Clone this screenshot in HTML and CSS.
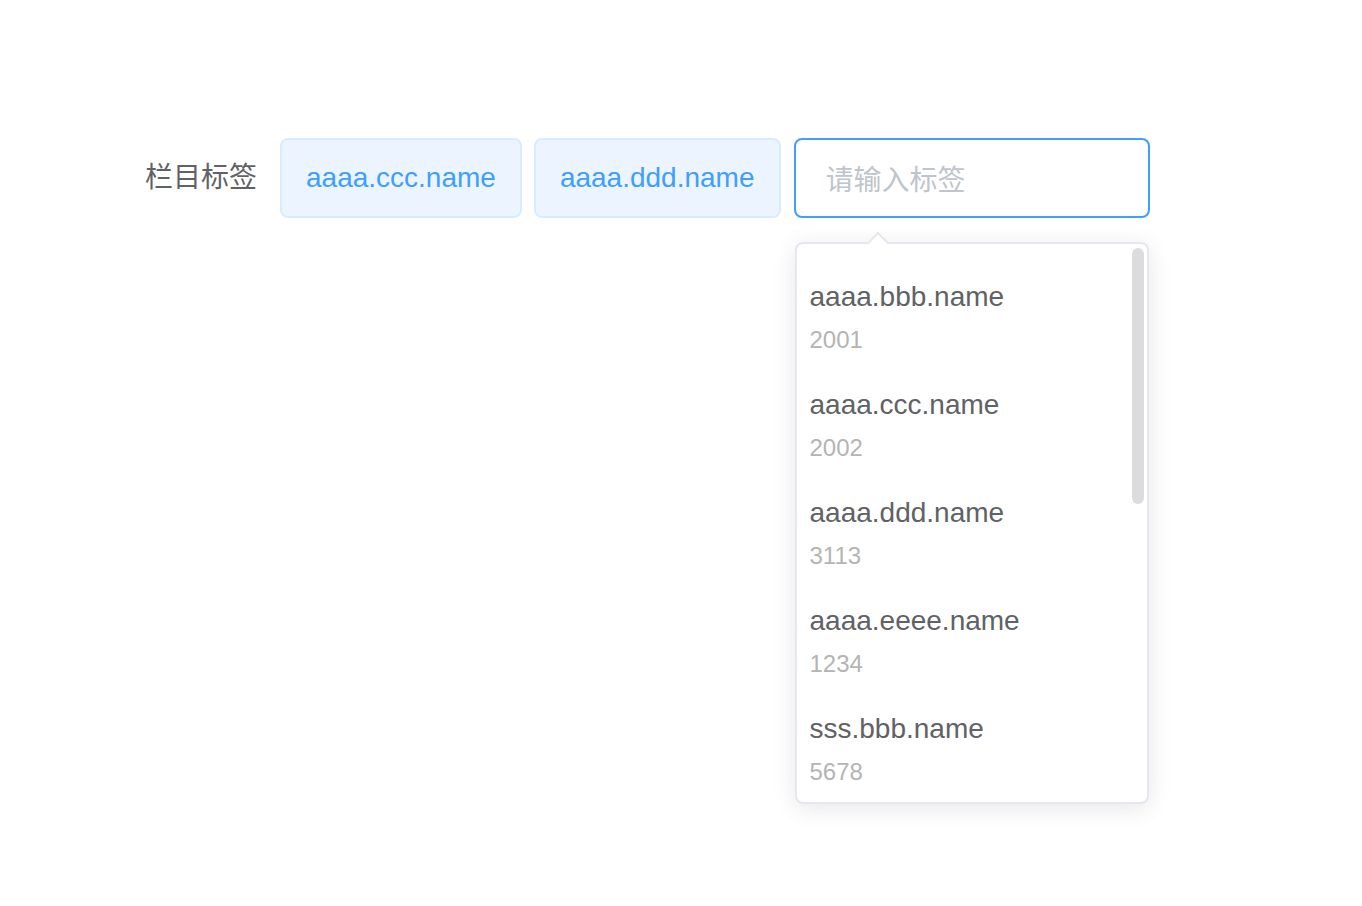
FILE: index.html
```html
<!DOCTYPE html>
<html lang="zh">
<head>
<meta charset="utf-8">
<title>栏目标签</title>
<link rel="stylesheet" href="styles.css">
</head>
<body>
<div class="page">
  <div class="form-item">
    <label class="label">栏目标签</label>
    <div class="content">
      <span class="tag">aaaa.ccc.name</span>
      <span class="tag">aaaa.ddd.name</span>
      <div class="field">
        <div class="input">请输入标签</div>
        <div class="suggest">
          <div class="pointer"></div>
          <div class="suggest-box">
            <ul class="suggest-list">
              <li class="suggest-item"><div class="name">aaaa.bbb.name</div><div class="num">2001</div></li>
              <li class="suggest-item"><div class="name">aaaa.ccc.name</div><div class="num">2002</div></li>
              <li class="suggest-item"><div class="name">aaaa.ddd.name</div><div class="num">3113</div></li>
              <li class="suggest-item"><div class="name">aaaa.eeee.name</div><div class="num">1234</div></li>
              <li class="suggest-item"><div class="name">sss.bbb.name</div><div class="num">5678</div></li>
            </ul>
            <div class="thumb"></div>
          </div>
        </div>
      </div>
    </div>
  </div>
</div>
</body>
</html>
```

FILE: styles.css
```css
* { box-sizing: border-box; }
html, body {
  margin: 0;
  padding: 0;
  background: #ffffff;
  min-height: 100vh;
  font-family: "Liberation Sans", "Noto Sans CJK SC", Arial, sans-serif;
}
.page {
  padding: 138px 0 0 145px;
  min-height: 100vh;
}
.form-item {
  display: flex;
  align-items: flex-start;
}
.label {
  font-size: 28px;
  line-height: 80px;
  color: #606266;
  padding-right: 23px;
  white-space: nowrap;
}
.content {
  display: flex;
  align-items: flex-start;
  gap: 12px;
}
.tag {
  display: inline-flex;
  align-items: center;
  height: 80px;
  padding: 0 24px;
  border: 2px solid #d9ecff;
  border-radius: 8px;
  background: #ecf5ff;
  color: #409eff;
  font-size: 28px;
  white-space: nowrap;
}
.field {
  display: flex;
  flex-direction: column;
  margin-left: 1px;
}
.input {
  width: 356px;
  height: 80px;
  border: 2px solid #409eff;
  border-radius: 8px;
  padding: 0 30px;
  display: flex;
  align-items: center;
  font-size: 28px;
  color: #c0c4cc;
  background: #fff;
}
.suggest {
  position: relative;
  margin: 24px 0 0 1px;
  width: 354px;
  height: 562px;
}
.pointer {
  position: absolute;
  left: 75px;
  top: -7px;
  width: 16px;
  height: 16px;
  background: #fff;
  border-top: 2px solid #e4e7ed;
  border-left: 2px solid #e4e7ed;
  transform: rotate(45deg);
  z-index: 2;
}
.suggest-box {
  position: relative;
  width: 100%;
  height: 100%;
  background: #fff;
  border: 2px solid #e4e7ed;
  border-radius: 8px;
  box-shadow: 0 4px 24px rgba(0, 0, 0, 0.1);
}
.suggest-list {
  list-style: none;
  margin: 0;
  padding: 20px 0 0 0;
}
.suggest-item {
  padding: 12px 13px 10px;
  height: 108px;
}
.name {
  font-size: 28px;
  line-height: 42px;
  color: #606266;
  white-space: nowrap;
}
.num {
  font-size: 24px;
  line-height: 44px;
  color: #b4b4b4;
}
.thumb {
  position: absolute;
  right: 3px;
  top: 4px;
  width: 12px;
  height: 256px;
  border-radius: 6px;
  background: #dcdcde;
}
```
